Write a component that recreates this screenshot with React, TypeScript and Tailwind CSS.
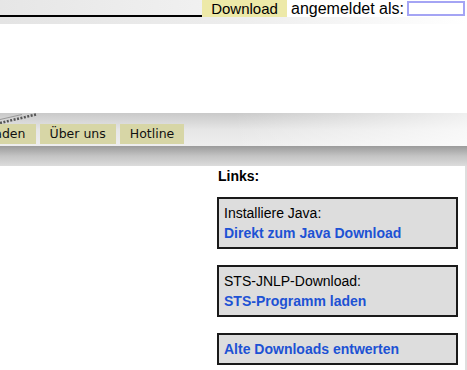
import React from "react";

const TABS = ["Herunterladen", "Über uns", "Hotline"];

const LINK_BOXES = [
  { label: "Installiere Java:", link: "Direkt zum Java Download" },
  { label: "STS-JNLP-Download:", link: "STS-Programm laden" },
  { label: null, link: "Alte Downloads entwerten" },
];

function Logo() {
  // tail end of the header logo, only a sliver is visible
  return (
    <svg width="38" height="12" viewBox="0 0 38 12" className="absolute left-0 top-0">
      <path d="M0 10 L36 1.5" stroke="#555" strokeWidth="2.5" strokeDasharray="2 1.5" />
      <path d="M0 6.5 L22 1.5" stroke="#999" strokeWidth="1" />
    </svg>
  );
}

export default function App() {
  return (
    <div className="w-[467px] h-[370px] overflow-hidden bg-white font-['Liberation_Sans',Arial,sans-serif]">
      {/* Top bar */}
      <div className="flex h-[17px] bg-gradient-to-r from-[#e6e6e6] via-[#f2f2f2] to-white">
        <div className="w-[202px] border-b-2 border-black" />
        <div className="w-[85px] bg-[#ede9a8] text-[15px] leading-[17px] text-center text-black">
          Download
        </div>
        <div className="flex-1 flex items-center bg-white pl-[4px]">
          <span className="text-[16px] leading-[17px] text-black">angemeldet als:</span>
          <input
            type="text"
            className="ml-[3px] w-[58px] h-[15px] border-2 border-[#a4a4f4] bg-white outline-none"
          />
        </div>
      </div>
      <div className="h-[7px] bg-gradient-to-r from-[#e4e4e4] via-[#ededed] to-white" />

      {/* Header space */}
      <div className="h-[89px]" />

      {/* Navigation */}
      <div className="relative h-[33px] bg-gradient-to-b from-[#c9c9c9] via-[#e6e6e6] to-[#eeeeee]">
        <div className="absolute inset-0 bg-gradient-to-r from-transparent via-transparent to-white/70" />
        <Logo />
        <div className="relative flex gap-[4px] pt-[11px] ml-[-75px] font-['DejaVu_Sans',Verdana,sans-serif] text-[12.5px]">
          {TABS.map((tab) => (
            <div key={tab} className="h-[20px] leading-[20px] px-[10px] bg-[#d7d6a6] text-[#111]">
              {tab}
            </div>
          ))}
        </div>
      </div>
      <div className="h-[20px] bg-gradient-to-b from-[#9b9b9b] via-[#c4c4c4] to-[#dcdcdc]" />

      {/* Content */}
      <div className="flex h-[204px] border-r-2 border-[#dedede] w-[467px]">
        <div className="w-[217px]" />
        <div className="w-[241px] text-[14px] text-black">
          <div className="font-bold pt-[2px] pl-[1px] leading-[16px]">Links:</div>
          <div className="mt-[13px] flex flex-col gap-[16px]">
            {LINK_BOXES.map((box) => (
              <div
                key={box.link}
                className="border-2 border-[#1a1a1a] bg-[#dddddd] px-[5px] py-[4px] leading-[20px]"
              >
                {box.label && <div>{box.label}</div>}
                <a href="#" className="block font-bold text-[#1d52d4]">
                  {box.link}
                </a>
              </div>
            ))}
          </div>
        </div>
      </div>
    </div>
  );
}
